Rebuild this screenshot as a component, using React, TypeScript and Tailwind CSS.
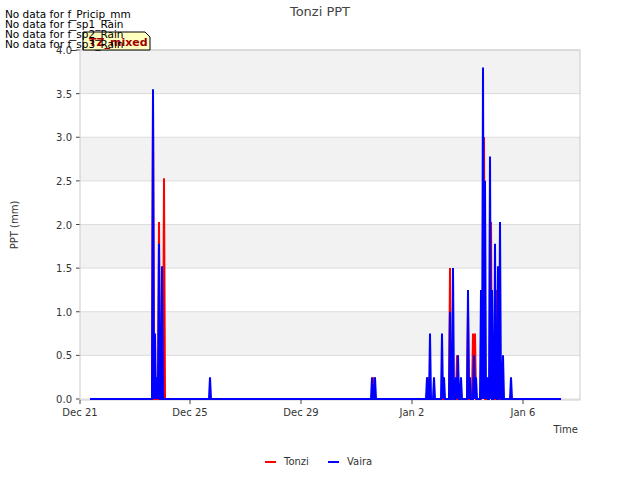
import React from "react";

const Y = (v: number) => 399 - v * 87.25;
const toPts = (spikes: [number, number][]) => {
  const pts: string[] = ["90,399"];
  for (const [x, v] of spikes) {
    pts.push(`${x - 1},399`, `${x},${Y(v)}`, `${x + 1},399`);
  }
  pts.push("561,399");
  return pts.join(" ");
};

const red: [number, number][] = [
  [153, 3.5], [156, 0.25], [159, 2.03], [161, 0.25], [164, 2.53], [374, 0.25], [428, 0.25],
  [443, 0.25], [450, 1.5], [452, 0.25], [457, 0.5], [468, 1.0], [473, 0.75], [475, 0.75], [482, 1.0], [484, 3.0], [489, 0.25], [491, 2.03], [497, 1.25], [499, 1.5], [502, 0.25],
];
const blue: [number, number][] = [
  [153, 3.55], [155, 0.75], [157, 0.25], [159, 1.78], [162, 1.52], [210, 0.25], [372, 0.25], [375, 0.25],
  [427, 0.25], [430, 0.75], [434, 0.25], [442, 0.75], [444, 0.25], [450, 1.0], [453, 1.5], [456, 0.25], [458, 0.5], [461, 0.25], [468, 1.25], [470, 0.25], [474, 0.5], [476, 0.25],
  [481, 1.25], [483, 3.8], [485, 2.5], [487, 0.25], [490, 2.78], [492, 1.25], [493, 0.5], [495, 1.78], [497, 0.75], [498, 1.52], [500, 2.03], [503, 0.5], [511, 0.25],
];

export default function App() {
  const ticks = [0, 0.5, 1, 1.5, 2, 2.5, 3, 3.5, 4];
  const xt: [number, string][] = [[80, "Dec 21"], [190, "Dec 25"], [301, "Dec 29"], [412, "Jan 2"], [523, "Jan 6"]];
  return (
    <div className="relative w-[640px] h-[480px] bg-white" style={{ fontFamily: "'DejaVu Sans', sans-serif" }}>
      <svg width="640" height="480" className="absolute left-0 top-0" fontFamily="DejaVu Sans, sans-serif">
        <rect x="80" y="50" width="500" height="350" fill="#ffffff" />
        {[0.5, 1.5, 2.5, 3.5].map((v) => (
          <rect key={v} x="80" y={Y(v + 0.5)} width="500" height={87.25 / 2} fill="#f2f2f2" />
        ))}
        {ticks.map((v) => (
          <g key={v}>
            <line x1="80" x2="580" y1={Y(v)} y2={Y(v)} stroke="#dcdcdc" strokeWidth="1" />
            <line x1="76" x2="80" y1={Y(v)} y2={Y(v)} stroke="#444" />
            <text x="72" y={Y(v) + 4} fontSize="10" textAnchor="end" fill="#333">{v.toFixed(1)}</text>
          </g>
        ))}
        <rect x="80" y="50" width="500" height="350" fill="none" stroke="#cccccc" />
        {xt.map(([x, l]) => (
          <g key={l}>
            <line x1={x} x2={x} y1="400" y2="404" stroke="#444" />
            <text x={x} y="416" fontSize="10" textAnchor="middle" fill="#333">{l}</text>
          </g>
        ))}
        <polyline points={toPts(red)} fill="none" stroke="#ff0000" strokeWidth="2" />
        <polyline points={toPts(blue)} fill="none" stroke="#0000ff" strokeWidth="2" />
        <text x="320" y="16" fontSize="13" textAnchor="middle" fill="#444">Tonzi PPT</text>
        <text x="578" y="433" fontSize="10" textAnchor="end" fill="#333">Time</text>
        <text x="18" y="225" fontSize="10" textAnchor="middle" fill="#333" transform="rotate(-90 18 225)">PPT (mm)</text>
        <line x1="265" x2="276" y1="462" y2="462" stroke="#ff0000" strokeWidth="2" />
        <text x="284" y="465" fontSize="10" fill="#333">Tonzi</text>
        <line x1="328" x2="339" y1="462" y2="462" stroke="#0000ff" strokeWidth="2" />
        <text x="347" y="465" fontSize="10" fill="#333">Vaira</text>
        <path d="M83 32 H145 L150 37 V50 H83 Z" fill="#ffffc0" stroke="#000" strokeWidth="1" />
        <text x="89" y="46" fontSize="11" fontWeight="bold" fill="#a00000">TZ_mixed</text>
        {["No data for f_Pricip_mm", "No data for f_sp1_Rain", "No data for f_sp2_Rain", "No data for f_sp3_Rain"].map((t, i) => (
          <text key={t} x="5" y={18 + i * 10} fontSize="10.5" fill="#000">{t}</text>
        ))}
      </svg>
    </div>
  );
}
